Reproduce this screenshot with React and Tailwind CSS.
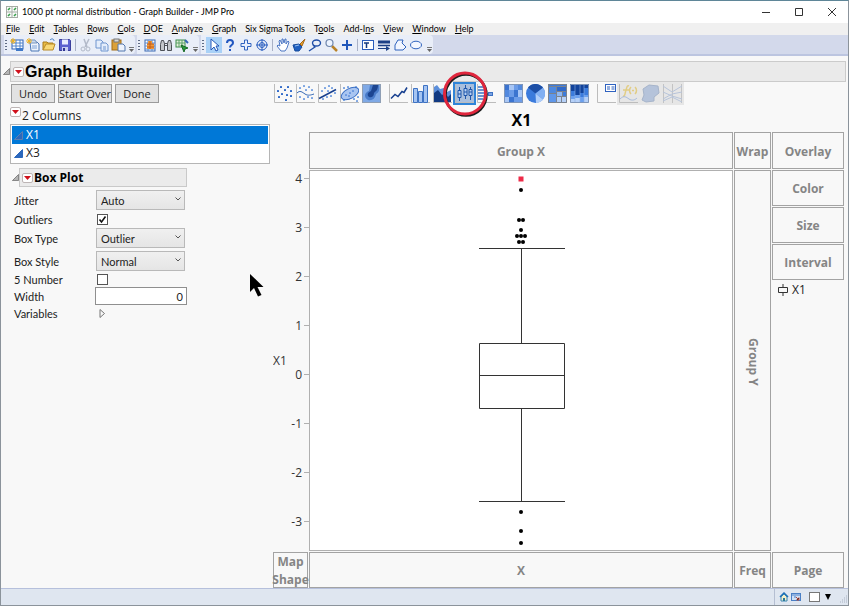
import { useState } from 'react'
import clsx from 'clsx'

// [before, accelerator key, after]
const MENUS = [
  ['', 'F', 'ile'],
  ['', 'E', 'dit'],
  ['', 'T', 'ables'],
  ['', 'R', 'ows'],
  ['', 'C', 'ols'],
  ['', 'D', 'OE'],
  ['', 'A', 'nalyze'],
  ['', 'G', 'raph'],
  ['Six Sigma Tools', '', ''],
  ['T', 'o', 'ols'],
  ['Add-I', 'n', 's'],
  ['', 'V', 'iew'],
  ['', 'W', 'indow'],
  ['', 'H', 'elp'],
]

const TICKS = [4, 3, 2, 1, 0, -1, -2, -3]
const OUTLIERS = [
  [212, 20], [210, 50], [214, 50], [212, 60], [208, 66], [212, 66], [216, 66],
  [210, 72], [214, 72], [212, 342], [212, 361], [212, 373],
]

const TOOL_ICONS = {
  newTable: (
    <>
      <rect x="3" y="3" width="11" height="9" fill="#fff" stroke="#2f62b5" />
      <path d="M3 6h11M3 9h11M7 3v9M11 3v9" stroke="#4f83cc" />
      <rect x="7" y="11" width="7" height="3" fill="#3f78c8" />
      <path d="M4 1v6M1 4h6M2 2l4 4M6 2L2 6" stroke="#efb323" />
    </>
  ),
  newScript: (
    <>
      <path d="M5 5h7l2 2v7H6z" fill="#eef3fb" stroke="#4b76b5" />
      <path d="M4 3h6l2 3H4z" fill="#c9d9ee" stroke="#7b97bd" />
      <path d="M7 9h5M7 11h5" stroke="#7ea3d6" />
      <path d="M4 1v6M1 4h6M2 2l4 4M6 2L2 6" stroke="#efb323" />
    </>
  ),
  open: (
    <>
      <path d="M2 13V5h4l1 1h5v3" fill="#e9bb45" stroke="#a87a1b" />
      <path d="M2 13l3-6h9l-2 6z" fill="#f8d876" stroke="#b98a26" />
      <path d="M9 3c2-2 4-1 4 1" fill="none" stroke="#3c78c3" />
    </>
  ),
  save: (
    <>
      <path d="M2.500 2.500h10l1 1v10h-11z" fill="#5c61cf" stroke="#3a3f9c" />
      <rect x="5" y="2.500" width="6" height="5" fill="#e9edff" />
      <rect x="5" y="10" width="6" height="4" fill="#c9cff2" />
      <rect x="6" y="11" width="2" height="3" fill="#30358f" />
    </>
  ),
  cut: (
    <g stroke="#b3bac9" fill="none">
      <path d="M6 2l3 8M11 2L7 10" strokeWidth="1.5" />
      <circle cx="5" cy="12" r="2" />
      <circle cx="10" cy="12" r="2" />
    </g>
  ),
  copy: (
    <g fill="#e4edfb" stroke="#6f95cf">
      <path d="M2 3h5l2 2v6H2z" />
      <path d="M7 6h5l2 2v6H7z" />
      <path d="M9 10h3M9 12h3" />
    </g>
  ),
  paste: (
    <>
      <rect x="2" y="3" width="9" height="10" fill="#dba13a" stroke="#a26c16" />
      <rect x="4" y="2" width="5" height="3" fill="#d9d9d9" stroke="#777" />
      <path d="M8 7h5l2 2v5H8z" fill="#eef3fc" stroke="#5276ae" />
    </>
  ),
  grid: (
    <>
      <rect x="3" y="3" width="10" height="11" fill="#fff" stroke="#3b68b2" />
      <path d="M3 6h10M3 9h10M3 12h10M6 3v11M10 3v11" stroke="#5d8bd0" />
      <path d="M6 4h4v3h2v5H5V7h1z" fill="#f19b3a" />
      <path d="M8 4v8M5 7h7M5 10h7" stroke="#c25a1b" />
    </>
  ),
  binoculars: (
    <g fill="#c3c6cb" stroke="#4c5057">
      <path d="M3.500 3.500h2l1 3v7h-4v-6z" />
      <path d="M10.500 3.500h2l1 4v6h-4v-7z" />
      <path d="M6.500 6.500h3M6.500 8.500h3" />
    </g>
  ),
  rerun: (
    <>
      <rect x="2" y="3" width="9" height="7" fill="#e3efdb" stroke="#3b8c49" />
      <path d="M2 6h9M5 3v7M8 3v7" stroke="#5fa36a" />
      <path d="M7 8l7 3-3 1-1 3z" fill="#2a9a3d" stroke="#196b28" />
      <path d="M11 3l3 3" stroke="#3465b5" strokeWidth="2" />
    </>
  ),
  arrow: <path d="M5 2v11l3-3 2 4 2-1-2-4h3z" fill="#fff" stroke="#2456b8" />,
  help: (
    <>
      <path d="M5 6c0-4 6-4 6 0 0 2-3 2-3 4.500" fill="none" stroke="#2257c0" strokeWidth="2" />
      <rect x="7" y="12" width="2" height="2" fill="#2257c0" />
    </>
  ),
  move: (
    <path d="M6.500 6.500V3h3v3.500H13v3H9.500V13h-3V9.500H3v-3z" fill="#e9f0fd" stroke="#2f62c0" />
  ),
  globe: (
    <g fill="none" stroke="#2a5fc0">
      <circle cx="8" cy="8" r="5" />
      <path d="M8 2v12M2 8h12" />
      <circle cx="8" cy="8" r="2.500" />
    </g>
  ),
  hand: (
    <path d="M6 14L2 9l1-1 2 1-1-5 1-1 2 4V2h1l1 4 1-4h1v5l2-3 1 1-2 6-2 3z" fill="#fff" stroke="#3a69bd" strokeWidth=".9" />
  ),
  brush: (
    <>
      <path d="M14 2l-5 5 2 2z" fill="#e6a32f" stroke="#a8681a" />
      <path d="M2 8l6-1 3 3-3 4H4z" fill="#1f5fc1" stroke="#164a9b" />
      <path d="M4 9l4-1" stroke="#9cc2f4" />
    </>
  ),
  lasso: (
    <g fill="none" stroke="#214fa8" strokeWidth="1.400">
      <ellipse cx="9.500" cy="6" rx="4" ry="3" />
      <path d="M6 8l2 2-6 4" />
    </g>
  ),
  magnifier: (
    <>
      <path d="M9 9l5 5" stroke="#b98228" strokeWidth="2.500" />
      <circle cx="6.500" cy="6" r="3.500" fill="#edf4ff" stroke="#6f86ac" strokeWidth="1.200" />
    </>
  ),
  plus: <path d="M8 3v10M3 8h10" stroke="#1f56ba" strokeWidth="2" />,
  textBox: (
    <>
      <rect x="2.500" y="3.500" width="11" height="9" fill="#fff" stroke="#2a5cbb" />
      <path d="M4 6h5M6.500 6v5" stroke="#153a80" strokeWidth="1.500" />
    </>
  ),
  lines: (
    <>
      <path d="M2 5h12" stroke="#1c3f86" strokeWidth="3" />
      <path d="M2 8.500h12" stroke="#1c3f86" strokeWidth="1.500" />
      <path d="M2 11.500h9" stroke="#1c3f86" />
      <path d="M10 9l4 2.500-4 2.500z" fill="#1c3f86" />
    </>
  ),
  polygon: <path d="M3 8l3-5h5l-1 3 4 4-3 3H3z" fill="#f2f6ff" stroke="#2f63be" />,
  ellipse: <ellipse cx="8" cy="8" rx="5.500" ry="3.800" fill="#f2f6ff" stroke="#2f63be" />,
}

const TOOLBARS = [
  ['newTable', 'newScript', 'open', 'save', '|', 'cut', 'copy', 'paste'],
  ['grid', 'binoculars', 'rerun'],
  ['arrow', 'help', 'move', 'globe', '|', 'hand', 'brush', 'lasso', 'magnifier', 'plus', '|', 'textBox', 'lines', 'polygon', 'ellipse'],
]

const Axes = () => <path d="M.5 0v18.500H19" fill="none" stroke="#bcbcbc" />

const Dots = ({ points, fill = '#7ba4e2' }) => points.map(([x, y]) => (
  <rect key={`${x}-${y}`} x={x - 1} y={y - 1} width="2" height="2" rx=".5" fill={fill} />
))

const CHART_ICONS = {
  points: (
    <>
      <Axes />
      <Dots fill="#2f69c9" points={[[7, 3], [14, 3], [4, 7], [11, 6], [17, 7], [8, 10], [13, 11], [5, 13], [17, 12], [12, 16]]} />
    </>
  ),
  smoother: (
    <>
      <Axes />
      <Dots points={[[4, 4], [8, 2], [13, 3], [16, 6], [4, 13], [8, 15], [12, 13], [16, 14], [10, 6]]} />
      <path d="M1 9c3-3 5-1 8 1s6 1 9 0" fill="none" stroke="#3468b5" />
    </>
  ),
  lineOfFit: (
    <>
      <Axes />
      <Dots points={[[4, 7], [7, 4], [11, 2], [14, 4], [5, 15], [9, 13], [13, 12], [17, 9], [10, 7]]} />
      <path d="M1 14.500L18 5.500" stroke="#173f8f" strokeWidth="1.500" />
    </>
  ),
  ellipse: (
    <>
      <Axes />
      <Dots points={[[4, 4], [8, 3], [16, 3], [18, 13], [4, 16], [14, 15], [17, 17]]} />
      <ellipse cx="10" cy="9.500" rx="9.500" ry="5" transform="rotate(-28 10 9.500)" fill="#a9c5f1" stroke="#3b70c5" />
      <Dots fill="#6c99df" points={[[6, 11], [10, 9], [13, 7], [9, 12]]} />
    </>
  ),
  contour: (
    <>
      <rect x=".5" y=".5" width="18" height="18" fill="#7fa9e6" stroke="#8f9fb5" />
      <path d="M8 1h9c1 6-1 8-3 9-1 5-4 7-8 6-5-3-3-8 1-9z" fill="#4a7cc9" />
      <path d="M11 1h5c0 5-2 6-4 8 0 4-3 5-5 4-3-3 0-5 2-6z" fill="#1c4591" />
    </>
  ),
  line: (
    <>
      <Axes />
      <path d="M2 14.500l4-4 3 2 4-5 2 1 3-5" fill="none" stroke="#173f8f" strokeWidth="1.500" />
    </>
  ),
  bar: (
    <>
      <Axes />
      <g fill="#a5c4f2" stroke="#3d72c4">
        <path d="M2.500 18.500v-14h4v14zM7.500 18.500v-11h4v11zM12.500 18.500v-17h4v17z" />
      </g>
    </>
  ),
  area: (
    <>
      <Axes />
      <path d="M1 18V3l3-2 3 4 4-1 3 4 4-2v12z" fill="#5c8fdb" />
      <path d="M1 18V9l4-3 4 5 3-2 3 4 3-3v8z" fill="#123a82" />
    </>
  ),
  boxPlot: (
    <>
      <Axes />
      <g fill="#b9d2f4" stroke="#1f56ab">
        <path d="M4.500 3v14M10.500 1v14M15.500 3v13" />
        <path d="M3 6.500h3v7H3zM9 4.500h3v7H9zM14 5.500h3v6h-3z" />
        <path d="M3 10h3M9 8h3M14 8h3" />
      </g>
    </>
  ),
  histogram: (
    <>
      <Axes />
      <path d="M1 3h5M1 6h6M1 9h7M1 12h6M1 15h5" stroke="#3d72c4" strokeWidth="1.500" />
      <path d="M9 10h6" stroke="#3d72c4" />
      <rect x="11.500" y="8.500" width="4" height="3" fill="#7ba4e2" stroke="#3d72c4" />
    </>
  ),
  heatmap: (
    <>
      <rect width="19" height="19" fill="#6c9ce8" />
      <path d="M0 0h5v6H0zM10 6h4v7h-4zM5 13h5v6H5z" fill="#3b74d0" />
      <path d="M5 0h5v6H5zM14 6h5v7h-5zM0 13h5v6H0z" fill="#a8c6f5" />
      <path d="M14 0h5v6h-5zM0 6h5v7H0z" fill="#5289de" />
      <path d="M.5.5h18v18H.5z" fill="none" stroke="#8096b8" />
    </>
  ),
  pie: (
    <>
      <circle cx="9.500" cy="9.500" r="9.500" fill="#3b7bdc" />
      <path d="M9.500 9.500L2 3.500A9.500 9.500 0 0 1 17 3.800z" fill="#1d4fa6" />
      <path d="M9.500 9.500L17 3.800a9.500 9.500 0 0 1 0 11.700z" fill="#82b0f2" />
      <path d="M9.500 9.500l7.500 6a9.500 9.500 0 0 1-7 3.500z" fill="#b1cffa" />
    </>
  ),
  treemap: (
    <g stroke="#7a828e">
      <rect x=".5" y=".5" width="18" height="18" fill="#3b7bdc" />
      <path d="M.5 2.500h8v7h-8z" fill="#4c88e0" />
      <path d="M8.500 2.500h10v5h-10z" fill="#2f69c9" />
      <path d="M.5 9.500h8v9h-8z" fill="#5f97ea" />
      <path d="M8.500 7.500h6v5h-6z" fill="#8db8f5" />
      <path d="M8.500 12.500h5v6h-5zM13.500 12.500h5v6h-5z" fill="#b5d0f8" />
    </g>
  ),
  mosaic: (
    <>
      <rect width="19" height="19" fill="#6ba0ee" />
      <path d="M0 0h5v7H0zM5 0h5v11H5zM10 0h4v9h-4zM14 0h5v4h-5z" fill="#12439c" />
      <path d="M0 7h5v5H0zM10 9h4v4h-4zM14 4h5v7h-5z" fill="#3b7bdc" />
      <path d="M5 14h5v5H5zM14 13h5v6h-5zM0 15h5v4H0z" fill="#b5d0f8" />
      <path d="M5 0v19M10 0v19M14 0v19" stroke="#8fb0e0" strokeWidth=".6" />
      <path d="M.5.5h18v18H.5z" fill="none" stroke="#8096b8" />
    </>
  ),
  caption: (
    <>
      <Axes />
      <rect x="8.500" y=".5" width="10" height="7" fill="#fff" stroke="#2f62c0" />
      <path d="M10 3h3M14.500 3h3M10 5h3M14.500 5h3" stroke="#2f62c0" strokeWidth="1.200" />
    </>
  ),
  formula: (
    <>
      <Axes />
      <g fill="none" stroke="#e2cd84" strokeWidth="1.500">
        <path d="M4 12c2 1 2-3 3-6s1-5 3-4M4 6h6" />
        <path d="M12 3c-2 2-2 5 0 7M16 3c2 2 2 5 0 7" />
        <path d="M13 6.500h2" />
      </g>
      <path d="M1 15c4-4 6-2 9 0s6 1 8-1" fill="none" stroke="#a7bbdc" />
    </>
  ),
  map: <path d="M2 5l6-4 9 1 1 7-5 4v4l-8 1-4-2 2-5z" fill="#b5c3da" stroke="#a6b4ca" />,
  parallel: (
    <g fill="none" stroke="#b7c4da">
      <path d="M.5 0v19M9.500 0v19M18.500 0v19" stroke="#c3c3c3" />
      <path d="M0 2l9 6 10-6M0 8l9 4 10 3M0 15l9-5 10-2M0 17l9-4 10 5" />
    </g>
  ),
}

const CHART_GROUPS = [
  ['points', 'smoother', 'lineOfFit', 'ellipse', 'contour'],
  ['line', 'bar', 'area', 'boxPlot', 'histogram'],
  ['heatmap', 'pie', 'treemap', 'mosaic'],
  ['caption', 'formula', 'map', 'parallel'],
]
const DISABLED_CHARTS = ['formula', 'map', 'parallel']

function ToolIcon ({ name }) {
  return (
    <button
      type="button"
      aria-label={name}
      className={clsx('flex h-4 w-4 items-center justify-center', name === 'arrow' && 'bg-[#a9d1f7]')}
    >
      <svg viewBox="0 0 16 16" className="h-4 w-4">{TOOL_ICONS[name]}</svg>
    </button>
  )
}

function Toolbar ({ items }) {
  return (
    <div className="flex h-[19px] items-center rounded-r bg-[#e9eef8] pl-px">
      <div className="mr-[2px] flex flex-col gap-[2px]">
        {[0, 1, 2, 3].map(i => <span key={i} className="h-px w-[2px] bg-[#5f6b85]" />)}
      </div>
      {items.map((name, i) => name === '|'
        ? <span key={i} className="mx-[2px] h-3 w-px bg-[#a9b1c6]" />
        : <ToolIcon key={name} name={name} />)}
      <svg viewBox="0 0 8 16" className="ml-px h-4 w-2">
        <path d="M2 10.500h5" stroke="#777" />
        <path d="M2 12h5l-2.500 3z" fill="#666" />
      </svg>
    </div>
  )
}

function Disclosure () {
  return (
    <svg viewBox="0 0 8 8" className="h-[7px] w-[7px] shrink-0">
      <path d="M7.500.5v7h-7z" fill="#b5b5b5" stroke="#777" />
    </svg>
  )
}

function RedTriangle () {
  return (
    <button type="button" aria-label="Options" className="flex h-[10px] w-[11px] shrink-0 items-center justify-center rounded-xs border border-[#bdb5b5] bg-white">
      <svg viewBox="0 0 7 4" className="h-1 w-[7px]"><path d="M0 0h7L3.500 4z" fill="#d0101b" /></svg>
    </button>
  )
}

function PushButton ({ className, children }) {
  return (
    <button type="button" className={clsx('h-[19px] border border-[#9b9b9b] bg-[#e2e2e2] text-[11px] leading-none whitespace-nowrap', className)}>
      {children}
    </button>
  )
}

function SelectField ({ id, label, options }) {
  return (
    <>
      <label htmlFor={id}>{label}</label>
      <div className="relative ml-px w-[89px]">
        <select id={id} className="block h-5 w-full appearance-none border border-[#b9b9b9] bg-linear-to-b from-[#f0f0f0] to-[#e5e5e5] pl-1 leading-none">
          {options.map(o => <option key={o}>{o}</option>)}
        </select>
        <svg viewBox="0 0 6 4" className="pointer-events-none absolute top-[7px] right-1 h-1 w-[6px]">
          <path d="M.5.5L3 3 5.500.5" fill="none" stroke="#555" />
        </svg>
      </div>
    </>
  )
}

function CheckField ({ id, label, defaultChecked }) {
  const [checked, setChecked] = useState(!!defaultChecked)
  return (
    <>
      <label htmlFor={id}>{label}</label>
      <div className="relative ml-[2px] h-[11px] w-[11px]">
        <input
          id={id}
          type="checkbox"
          checked={checked}
          onChange={e => setChecked(e.target.checked)}
          className="block h-[11px] w-[11px] appearance-none border border-[#555] bg-white"
        />
        {checked && (
          <svg viewBox="0 0 11 11" className="pointer-events-none absolute inset-0 h-[11px] w-[11px]">
            <path d="M2.500 5.500l2 2.500 4-5.500" fill="none" stroke="#111" strokeWidth="1.600" />
          </svg>
        )}
      </div>
    </>
  )
}

function Zone ({ className, children }) {
  return (
    <div className={clsx('flex items-center justify-center border border-[#a3a3a3] pt-[2px] text-center text-xs font-bold text-[#858585]', className)}>
      {children}
    </div>
  )
}

function TitleBar () {
  return (
    <header className="flex h-[22px] shrink-0 items-center bg-white pl-[5px]">
      <svg viewBox="0 0 12 12" className="h-3 w-3">
        <rect x=".5" y=".5" width="11" height="11" fill="#fafafa" stroke="#a5ada5" />
        <path d="M6 0v12M0 6h12" stroke="#a5ada5" />
        <path d="M2 4l2-2M8 4l2-2M2 10l2-2M8 10l2-2" stroke="#38a04a" strokeWidth="1.600" />
      </svg>
      <h1 className="ml-1 font-['Lato','Open_Sans',sans-serif] text-[9px] whitespace-nowrap text-black">1000 pt normal distribution - Graph Builder - JMP Pro</h1>
      <div className="ml-auto flex">
        <button type="button" aria-label="Minimize" className="flex w-[33px] justify-center">
          <svg viewBox="0 0 8 8" className="h-2 w-2"><path d="M0 4.500h8" stroke="#333" /></svg>
        </button>
        <button type="button" aria-label="Maximize" className="flex w-[33px] justify-center">
          <svg viewBox="0 0 8 8" className="h-2 w-2"><path d="M.5.5h7v7h-7z" fill="none" stroke="#333" /></svg>
        </button>
        <button type="button" aria-label="Close" className="flex w-[33px] justify-center">
          <svg viewBox="0 0 8 8" className="h-2 w-2"><path d="M0 0l8 8M8 0L0 8" stroke="#333" /></svg>
        </button>
      </div>
    </header>
  )
}

function ControlPanel () {
  return (
    <aside className="relative w-[272px] shrink-0 pt-[2px] pl-[9px]">
      <div className="flex gap-[3px] pl-px">
        <PushButton className="w-11">Undo</PushButton>
        <PushButton className="w-[54px]">Start Over</PushButton>
        <PushButton className="w-11">Done</PushButton>
      </div>

      <div className="flex h-[21px] items-start gap-px pt-1">
        <RedTriangle />
        <span className="pt-px text-xs leading-4">2 Columns</span>
      </div>
      <ul className="mr-[3px] border border-[#b5b5b5] bg-white p-px text-xs">
        {['X1', 'X3'].map((col, i) => (
          <li key={col} className={clsx('flex h-[18px] items-center gap-[3px] pl-[2px]', i === 0 && 'bg-[#0078d7] text-white')}>
            <svg viewBox="0 0 9 9" className="h-[9px] w-[9px]">
              <path d="M8.500.5v8h-8z" fill="#2c68bd" stroke={i === 0 ? '#5c7fb0' : '#2c68bd'} />
            </svg>
            {col}
          </li>
        ))}
      </ul>

      <div className="mt-1 flex items-center pl-[2px]">
        <Disclosure />
        <h3 className="flex h-[19px] w-[168px] items-center gap-px border border-[#c9c9c9] bg-[#ebebeb] pl-[2px] text-xs font-bold text-black">
          <RedTriangle />
          Box Plot
        </h3>
      </div>

      <form className="mt-[3px] grid grid-cols-[81px_1fr] grid-rows-[20px_18px_20px_3px_20px_16px_18px_16px] items-center pl-1 font-['Lato','Open_Sans',sans-serif] text-[11px] leading-none">
        <SelectField id="jitter" label="Jitter" options={['Auto', 'None']} />
        <CheckField id="outliers" label="Outliers" defaultChecked />
        <SelectField id="boxType" label="Box Type" options={['Outlier', 'Quantile']} />
        <span className="col-span-2" />
        <SelectField id="boxStyle" label="Box Style" options={['Normal', 'Solid', 'Thin']} />
        <CheckField id="fiveNumber" label="5 Number" />
        <label htmlFor="boxWidth">Width</label>
        <input id="boxWidth" type="text" defaultValue="0" className="h-[18px] w-[92px] border border-[#8f8f8f] bg-white pr-[3px] text-right" />
        <span>Variables</span>
        <button type="button" aria-label="Show variables" className="ml-1 w-[6px]">
          <svg viewBox="0 0 6 9" className="block h-[9px] w-[6px]"><path d="M1 .5v8l4.500-4z" fill="#f8f8f8" stroke="#777" /></svg>
        </button>
      </form>

      {/* mouse pointer */}
      <svg viewBox="0 0 14 23" className="absolute top-48 left-[249px] h-[23px] w-[14px]">
        <path d="M0 0v18l4-4 4 8.500 3.500-1.500-4-8H13.500z" fill="#000" />
      </svg>
    </aside>
  )
}

function ChartPicker () {
  return (
    <div className="flex h-5 gap-2 pl-px">
      {CHART_GROUPS.map((group, g) => (
        <div key={g} className="flex gap-[3px]">
          {group.map(name => (
            <button
              key={name}
              type="button"
              aria-label={name}
              disabled={DISABLED_CHARTS.includes(name)}
              className={clsx(
                'relative h-[19px] w-[19px]',
                name === 'boxPlot' && 'bg-[#a9bfdd] outline-2 outline-[#2f84d8]',
                DISABLED_CHARTS.includes(name) && 'bg-[#e6e6e6] outline-2 outline-[#e6e6e6]'
              )}
            >
              <svg viewBox="0 0 19 19" className="block h-[19px] w-[19px]">{CHART_ICONS[name]}</svg>
            </button>
          ))}
        </div>
      ))}
    </div>
  )
}

// hand-marked ring over the box plot element
function Ring () {
  return (
    <svg viewBox="0 0 48 48" className="pointer-events-none absolute top-[-12px] left-[168px] z-10 h-12 w-12">
      <circle cx="25" cy="25" r="20.500" fill="none" stroke="#1c1c1c" strokeWidth="2.500" />
      <circle cx="24" cy="23.500" r="20.500" fill="none" stroke="#e0263d" strokeWidth="3" />
    </svg>
  )
}

function BoxPlot () {
  return (
    <svg viewBox="1 0 460 381" className="col-span-2 h-full w-full">
      <rect x="37" width="424" height="381" fill="#fff" />
      <path d="M37 .5h424M37 380.500h424M460.500 0v381" stroke="#b0b0b0" />
      <path d="M37.500 0v381" stroke="#b0b0b0" />
      <g fontSize="12" fill="#333">
        <text x="1" y="195">X1</text>
        {TICKS.map((t, i) => (
          <g key={t}>
            <text x="30" y={13 + i * 49} textAnchor="end">{t}</text>
            <path d={`M32 ${8.5 + i * 49}h5`} stroke="#b0b0b0" />
          </g>
        ))}
      </g>
      <g transform="translate(37 0)" fill="none" stroke="#333">
        <path d="M170 78.500h86M170 331.500h86M212.500 79v94M212.500 239v92" />
        <path d="M170.500 173.500h85v65h-85zM170 205.500h86" />
      </g>
      <g transform="translate(37 0)">
        <rect x="209.500" y="6.500" width="5" height="5" fill="#ee2b48" />
        {OUTLIERS.map(([cx, cy]) => <circle key={`${cx}-${cy}`} cx={cx} cy={cy} r="2" fill="#000" />)}
      </g>
    </svg>
  )
}

function StatusBar () {
  return (
    <footer className="flex h-[17px] shrink-0 items-center justify-end border-t border-[#b6c0dc] bg-[#dfe6f0]">
      <span className="h-full w-px bg-[#b5bfd2]" />
      <svg viewBox="0 0 10 10" className="ml-1 h-[10px] w-[10px]">
        <path d="M1 5l4-4 4 4" fill="none" stroke="#1d6fb8" strokeWidth="1.500" />
        <path d="M2 5l3-3 3 3v4H2z" fill="#f5efc9" stroke="#3a86b5" />
        <path d="M4 6h2v3H4z" fill="#2a7a9a" />
      </svg>
      <svg viewBox="0 0 10 10" className="ml-[2px] h-[10px] w-[10px]">
        <rect x=".5" y="1.500" width="9" height="7" fill="#cfe0f6" stroke="#4a7fc5" />
        <path d="M1 3h8M3 5h2" stroke="#4a7fc5" />
        <path d="M5 5l3 3M8 5.500V8H5.500" stroke="#b7483a" />
      </svg>
      <input type="checkbox" aria-label="Show window" className="ml-2 h-[10px] w-[11px] appearance-none border border-[#777] bg-white" />
      <svg viewBox="0 0 6 6" className="ml-[5px] h-[6px] w-[6px]"><path d="M0 0h6L3 6z" fill="#000" /></svg>
      <svg viewBox="0 0 9 9" className="mt-1 ml-2 h-[9px] w-[9px]">
        <path d="M7 1h1M5 3h1M7 3h1M3 5h1M5 5h1M7 5h1M1 7h1M3 7h1M5 7h1M7 7h1" stroke="#a9b2c2" />
      </svg>
    </footer>
  )
}

export default function App () {
  return (
    <div className="flex h-screen flex-col overflow-hidden border border-t-[#5f8698] border-r-[#8b939b] border-b-[#8b939b] border-l-[#8b939b] bg-[#f8f8f8] font-['Open_Sans','Noto_Sans',sans-serif] text-[#222]">
      <TitleBar />
      <nav className="flex h-3 shrink-0 items-center gap-[9px] bg-[#f0f0f0] pl-[5px] font-['Lato','Open_Sans',sans-serif] text-[9px] leading-3 text-black">
        {MENUS.map(([before, key, after]) => (
          <button key={before + key + after} type="button" className="whitespace-nowrap">
            {before}<span className="underline">{key}</span>{after}
          </button>
        ))}
      </nav>
      <div className="flex h-[21px] shrink-0 gap-[2px] border-b-2 border-[#bcc5e0] bg-[#d3d9eb] pl-[3px]">
        {TOOLBARS.map((items, i) => <Toolbar key={i} items={items} />)}
      </div>

      <div className="mt-[5px] flex shrink-0 items-center pr-[2px] pl-[2px]">
        <Disclosure />
        <h2 className="flex h-[21px] flex-1 items-center gap-px border border-[#cbcbcb] bg-[#eaeaea] pl-[2px] font-['Liberation_Sans',Arial,sans-serif] text-base leading-none font-bold text-black">
          <RedTriangle />
          Graph Builder
        </h2>
      </div>

      <main className="flex min-h-0 flex-1">
        <ControlPanel />
        <section className="relative flex min-w-0 flex-1 flex-col pt-[2px] pr-1">
          <ChartPicker />
          <Ring />
          <h3 className="flex h-7 items-center justify-center pt-[3px] pr-[74px] text-base leading-none font-bold text-black">X1</h3>
          <div className="grid min-h-0 flex-1 grid-cols-[35px_minmax(0,1fr)_37px_72px] grid-rows-[37px_minmax(0,1fr)_36px] gap-px">
            <span />
            <Zone>Group X</Zone>
            <Zone>Wrap</Zone>
            <div className="row-span-2 flex flex-col gap-px">
              <Zone className="h-[37px]">Overlay</Zone>
              <Zone className="h-9">Color</Zone>
              <Zone className="h-9">Size</Zone>
              <Zone className="h-9">Interval</Zone>
              <div className="flex items-center gap-1 pt-px pl-[6px] text-xs">
                <svg viewBox="0 0 10 12" className="h-3 w-[10px]">
                  <path d="M.5 3.500h9v5h-9zM5 0v3M5 9v3" fill="none" stroke="#333" />
                </svg>
                X1
              </div>
            </div>
            <BoxPlot />
            <Zone><span className="[writing-mode:vertical-rl]">Group Y</span></Zone>
            <Zone className="leading-[18px]">Map Shape</Zone>
            <Zone>X</Zone>
            <Zone>Freq</Zone>
            <Zone>Page</Zone>
          </div>
        </section>
      </main>
      <StatusBar />
    </div>
  )
}
